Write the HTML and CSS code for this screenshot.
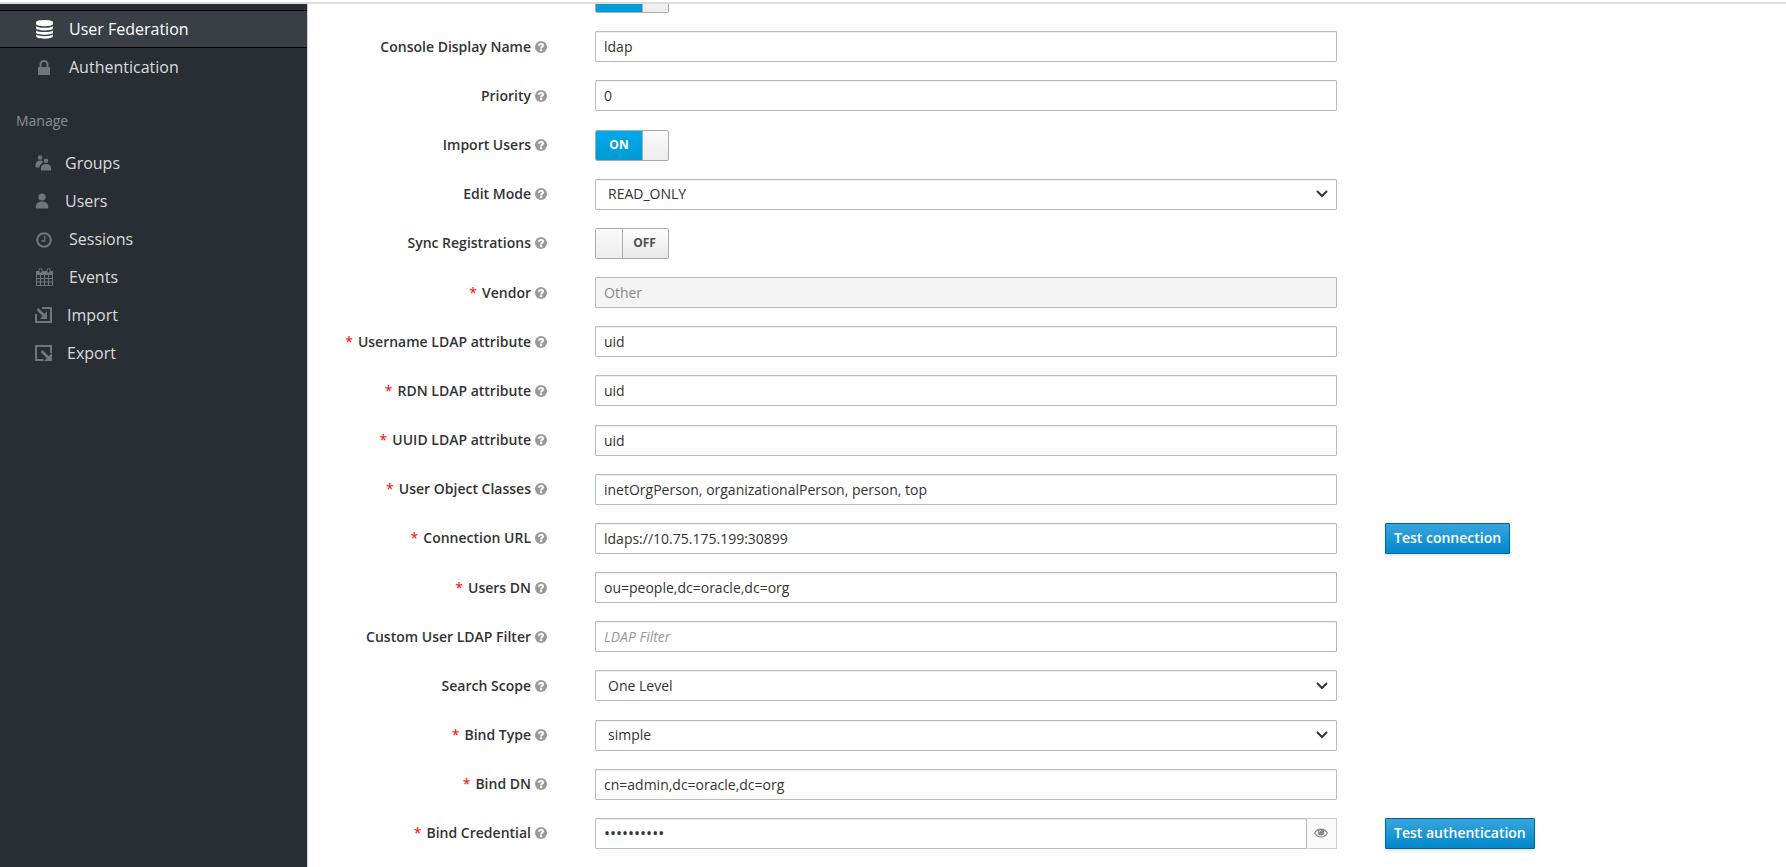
FILE: index.html
```
<!DOCTYPE html>
<html lang="en">
<head>
<meta charset="utf-8">
<title>User Federation</title>
<link rel="stylesheet" href="styles.css">
</head>
<body>
<svg class="sprite" aria-hidden="true">
  <symbol id="help" viewBox="0 0 12 12"><circle cx="6" cy="6" r="6" fill="#999"/><path d="M3.900 4.700C4 2.300 8.100 2.300 8.100 4.500C8.100 5.800 6.100 5.600 6.100 7.400" fill="none" stroke="#fff" stroke-width="2"/><rect x="5" y="8.200" width="2.200" height="1.900" fill="#fff"/></symbol>
</svg>
<div class="topline"></div>
<div class="page">
  <nav class="sidebar">
    <a class="item active" href="#"><svg class="icon fa" viewBox="0 0 18 20"><path fill="currentColor" d="M1 3.500C1 .3 18 .3 18 3.500V5C18 8 1 8 1 5zM1 7.200C4 9.300 15 9.300 18 7.200V9.300C18 12.200 1 12.200 1 9.300zM1 11.500C4 13.600 15 13.600 18 11.500V13.500C18 16.400 1 16.400 1 13.500zM1 15.600C4 17.700 15 17.700 18 15.600V17C18 20.500 1 20.500 1 17z"/></svg><span>User Federation</span></a>
    <a class="item" href="#"><svg class="icon fa" viewBox="0 0 18 20"><rect x="3" y="10" width="12" height="8" rx="1" fill="currentColor"/><path d="M5.500 10.500V7.500a3.500 3.500 0 0 1 7 0v3" fill="none" stroke="currentColor" stroke-width="2"/></svg><span>Authentication</span></a>
    <h2 class="heading">Manage</h2>
    <a class="item" href="#"><svg class="icon user" viewBox="0 0 16 20"><g fill="currentColor"><circle cx="5" cy="4.500" r="2.200"/><circle cx="11" cy="7.800" r="2.300"/><path d="M.5 14.500V12C.5 9 3 7.500 5 7.500C6.500 7.500 7.500 8 8 9C7 10.500 7 10.700 5.500 11.500C4.500 12.500 4.500 13.500 4.500 14.500zM6 17.500V15C6 12.500 8 11 11 11s5 1.500 5 4v2.500z"/></g></svg><span>Groups</span></a>
    <a class="item" href="#"><svg class="icon user" viewBox="0 0 16 20"><g fill="currentColor"><circle cx="7" cy="6" r="3.600"/><path d="M.8 17.500V15.500C.8 12 4 10.500 7 10.500s6.200 1.500 6.200 5v2z"/></g></svg><span>Users</span></a>
    <a class="item" href="#"><svg class="icon fa" viewBox="0 0 18 20"><circle cx="9" cy="11" r="6.800" fill="none" stroke="currentColor" stroke-width="2"/><path d="M9.800 7v5H6.500" fill="none" stroke="currentColor" stroke-width="1.300"/></svg><span>Sessions</span></a>
    <a class="item" href="#"><svg class="icon fa" viewBox="0 0 18 20"><path d="M1.500 4.500h16v14h-16z" fill="none" stroke="currentColor"/><path d="M1 4h17v4H1z" fill="currentColor"/><rect x="4" y="1.500" width="3" height="4.500" rx="1.500" fill="#292e34" stroke="currentColor"/><rect x="12" y="1.500" width="3" height="4.500" rx="1.500" fill="#292e34" stroke="currentColor"/><path d="M5.500 8v10M9.500 8v10M13.500 8v10M1 11.500h17M1 15h17" stroke="currentColor" fill="none"/></svg><span>Events</span></a>
    <a class="item" href="#"><svg class="icon pf" viewBox="0 0 17 20"><path d="M1 9v8h15V3H7" fill="none" stroke="currentColor" stroke-width="2"/><path d="M2.500 4l7.500 7.500" stroke="currentColor" stroke-width="2.800"/><path d="M12 6v8H5z" fill="currentColor"/></svg><span>Import</span></a>
    <a class="item" href="#"><svg class="icon pf" viewBox="0 0 17 20"><path d="M8.500 17H1V3h15v7" fill="none" stroke="currentColor" stroke-width="2"/><path d="M6.500 8l8 8" stroke="currentColor" stroke-width="2.800"/><path d="M17 10v8H9z" fill="currentColor"/></svg><span>Export</span></a>
  </nav>
  <main class="content">
    <form class="form">
      <div class="row"><span></span><label class="switch on"><input type="checkbox" checked aria-label="Enabled"><span class="state"></span><span class="handle"></span></label></div>
      <div class="row"><label class="label" for="name"><span>Console Display Name</span><svg class="help"><use href="#help"/></svg></label><input class="field" id="name" type="text" value="ldap"></div>
      <div class="row"><label class="label" for="priority"><span>Priority</span><svg class="help"><use href="#help"/></svg></label><input class="field" id="priority" type="text" value="0"></div>
      <div class="row"><label class="label" for="import"><span>Import Users</span><svg class="help"><use href="#help"/></svg></label><label class="switch on"><input id="import" type="checkbox" checked><span class="state">ON</span><span class="handle"></span></label></div>
      <div class="row"><label class="label" for="mode"><span>Edit Mode</span><svg class="help"><use href="#help"/></svg></label><select class="field select" id="mode"><option>READ_ONLY</option></select></div>
      <div class="row"><label class="label" for="sync"><span>Sync Registrations</span><svg class="help"><use href="#help"/></svg></label><label class="switch off"><input id="sync" type="checkbox"><span class="handle"></span><span class="state">OFF</span></label></div>
      <div class="row"><label class="label" for="vendor"><b>*</b><span>Vendor</span><svg class="help"><use href="#help"/></svg></label><select class="field plain" id="vendor" disabled><option>Other</option></select></div>
      <div class="row"><label class="label" for="username"><b>*</b><span>Username LDAP attribute</span><svg class="help"><use href="#help"/></svg></label><input class="field" id="username" type="text" value="uid"></div>
      <div class="row"><label class="label" for="rdn"><b>*</b><span>RDN LDAP attribute</span><svg class="help"><use href="#help"/></svg></label><input class="field" id="rdn" type="text" value="uid"></div>
      <div class="row"><label class="label" for="uuid"><b>*</b><span>UUID LDAP attribute</span><svg class="help"><use href="#help"/></svg></label><input class="field" id="uuid" type="text" value="uid"></div>
      <div class="row"><label class="label" for="classes"><b>*</b><span>User Object Classes</span><svg class="help"><use href="#help"/></svg></label><input class="field" id="classes" type="text" value="inetOrgPerson, organizationalPerson, person, top"></div>
      <div class="row"><label class="label" for="url"><b>*</b><span>Connection URL</span><svg class="help"><use href="#help"/></svg></label><input class="field" id="url" type="text" value="ldaps://10.75.175.199:30899"><button class="button" type="button">Test connection</button></div>
      <div class="row"><label class="label" for="usersdn"><b>*</b><span>Users DN</span><svg class="help"><use href="#help"/></svg></label><input class="field" id="usersdn" type="text" value="ou=people,dc=oracle,dc=org"></div>
      <div class="row"><label class="label" for="filter"><span>Custom User LDAP Filter</span><svg class="help"><use href="#help"/></svg></label><input class="field" id="filter" type="text" placeholder="LDAP Filter"></div>
      <div class="row"><label class="label" for="scope"><span>Search Scope</span><svg class="help"><use href="#help"/></svg></label><select class="field select" id="scope"><option>One Level</option></select></div>
      <div class="row"><label class="label" for="bindtype"><b>*</b><span>Bind Type</span><svg class="help"><use href="#help"/></svg></label><select class="field select" id="bindtype"><option>simple</option></select></div>
      <div class="row"><label class="label" for="binddn"><b>*</b><span>Bind DN</span><svg class="help"><use href="#help"/></svg></label><input class="field" id="binddn" type="text" value="cn=admin,dc=oracle,dc=org"></div>
      <div class="row"><label class="label" for="cred"><b>*</b><span>Bind Credential</span><svg class="help"><use href="#help"/></svg></label><div class="group"><input class="field secret" id="cred" type="password" value="credential"><button class="reveal" type="button" aria-label="Show credential"><svg viewBox="0 0 14 10"><path d="M.6 5C3.500-.3 10.500-.3 13.400 5C10.500 10.300 3.500 10.300 .6 5z" fill="none" stroke="#888" stroke-width="1.200"/><circle cx="7" cy="4.200" r="3.200" fill="#888"/><path d="M5.200 4.200a1.800 1.800 0 0 1 1.800-1.800" fill="none" stroke="#fafafa" stroke-width=".8"/></svg></button></div><button class="button" type="button">Test authentication</button></div>
    </form>
  </main>
</div>
</body>
</html>
```
FILE: styles.css
```
* { box-sizing: border-box; }
body {
  margin: 0;
  height: 100vh;
  display: flex;
  flex-direction: column;
  overflow: hidden;
  background: #fff;
  color: #333;
  font: 14px/20px "Open Sans", sans-serif;
}
.sprite { display: none; }
.topline { flex: none; height: 4px; border-bottom: 2px solid #dcdcdc; }
.page { flex: 1; min-height: 0; display: flex; }

.sidebar {
  flex: none;
  width: 308px;
  padding-top: 6px;
  background: #292e34;
  border-right: 1px solid #d1d1d1;
}
.item {
  display: flex;
  align-items: center;
  height: 38px;
  padding-left: 35px;
  color: #dbdbdb;
  font-size: 16px;
  text-decoration: none;
}
.item.active {
  background: #393f45;
  border-top: 1px solid #000;
  border-bottom: 1px solid #000;
  color: #fff;
}
.icon { flex: none; height: 20px; color: #72767b; }
.icon.fa { width: 18px; margin-right: 16px; }
.icon.pf { width: 17px; margin-right: 15px; }
.icon.user { width: 16px; margin-right: 14px; }
.active .icon { color: #fff; }
.heading {
  margin: 25px 0 13px;
  padding-left: 16px;
  color: #8b8d8f;
  font-size: 14px;
  font-weight: 400;
  line-height: 20px;
}

.content { flex: 1; min-width: 0; overflow: hidden; }
.form {
  display: flex;
  flex-direction: column;
  justify-content: space-between;
  min-height: 100vh;
  margin-top: -22px;
}
.row {
  display: grid;
  grid-template-columns: 239fr 742fr 401fr;
  column-gap: 48px;
  align-items: center;
  justify-items: start;
}
.label {
  display: flex;
  align-items: center;
  justify-self: end;
  font-weight: 600;
  white-space: nowrap;
}
.label b { margin-right: 5px; color: #f00; font-weight: 400; }
.help { width: 12px; height: 12px; margin-left: 4px; }

.field {
  width: 100%;
  height: 31px;
  padding: 2px 8px;
  background: #fff;
  border: 1px solid #bbb;
  border-radius: 1px;
  box-shadow: inset 0 1px 1px rgba(0, 0, 0, .075);
  color: #333;
  font: inherit;
}
.field::placeholder { color: #999; font-style: italic; }
.field.plain { appearance: none; background: #f4f4f4; color: #888; opacity: 1; box-shadow: none; }
.field.select {
  appearance: none;
  padding: 2px 32px 2px 12px;
  background: #fff url("data:image/svg+xml,%3Csvg xmlns='http://www.w3.org/2000/svg' width='12' height='8'%3E%3Cpath d='M1 1l5 5 5-5' fill='none' stroke='%23333' stroke-width='2'/%3E%3C/svg%3E") no-repeat right 8px center;
}
.field.secret { font-size: 16px; }
.group { display: flex; width: 100%; }
.reveal {
  flex: none;
  width: 30px;
  height: 31px;
  padding: 0 7px;
  background: #fafafa;
  border: 1px solid #ccc;
  border-left: 0;
}
.reveal svg { display: block; width: 14px; height: 10px; }

.switch {
  display: flex;
  width: 74px;
  height: 31px;
  border: 1px solid #aaa;
  border-radius: 2px;
  overflow: hidden;
  font-size: 12px;
  font-weight: 700;
}
.switch input { position: absolute; opacity: 0; pointer-events: none; }
.state { display: grid; place-items: center; flex: 1; }
.handle { width: 26px; background: linear-gradient(#fafafa, #ededed); }
.on .state { background: linear-gradient(#00a9ec, #009bd3); color: #fff; }
.on .handle { border-left: 1px solid #aaa; }
.off .state { padding-right: 2px; background: linear-gradient(#fff, #e8e8e8); color: #4d5258; }
.off .handle { width: 27px; border-right: 1px solid #aaa; }

.button {
  height: 31px;
  padding: 0 8px;
  background: linear-gradient(#39a5dc, #0088ce);
  border: 1px solid #00659c;
  border-radius: 1px;
  box-shadow: 0 2px 3px rgba(0, 0, 0, .1);
  color: #fff;
  font: 600 14px/20px "Open Sans", sans-serif;
  white-space: nowrap;
}
```
